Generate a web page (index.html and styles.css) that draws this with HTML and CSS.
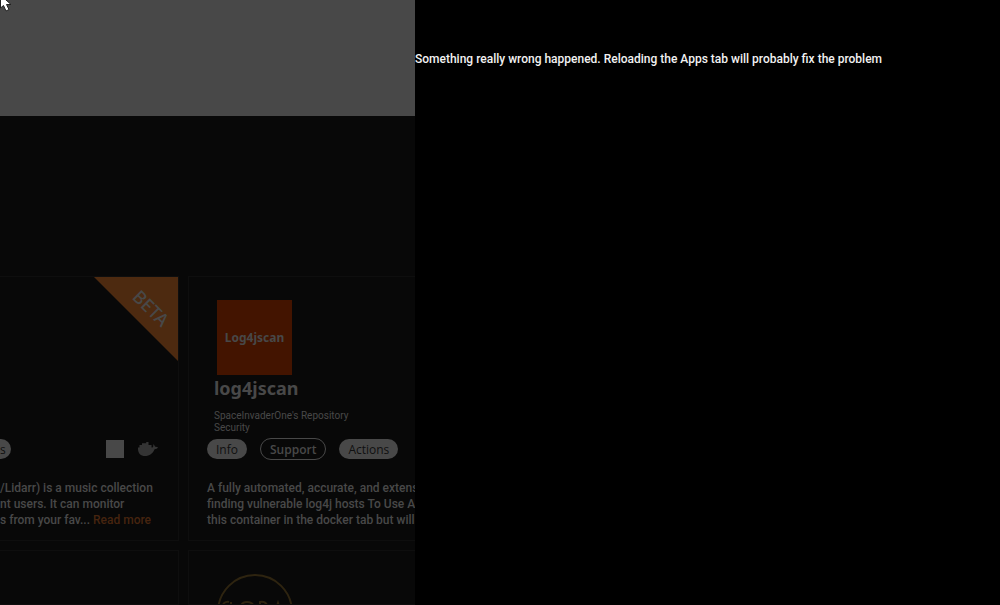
FILE: index.html
```html
<!DOCTYPE html>
<html lang="en">
<head>
    <meta charset="UTF-8">
    <meta name="viewport" content="width=device-width, initial-scale=1.0">
    <title>Apps</title>
    <link rel="stylesheet" href="styles.css">
</head>
<body>
    <header class="page-header"></header>

    <main class="app-grid">
        <article class="card card-cut">
            <div class="ribbon"><span class="ribbon-text">BETA</span></div>
            <div class="card-top"></div>
            <div class="card-actions">
                <button class="pill pill-cut">s</button>
                <div class="card-icons">
                    <input type="checkbox" class="pick" aria-label="Select app">
                    <svg class="docker" viewBox="0 0 20 14" aria-hidden="true">
                        <path d="M0 5.500h14.500c1-.6 1-2 .5-3.300c1.300.6 1.900 1.600 2 2.600c1-.2 2.100 0 3 .5c-.7 1.400-2 1.900-3.400 1.900C14.800 11.500 11.500 14 7 14C2 14-.3 10.500 0 5.500z"/>
                        <path d="M1.500 3h12v3h-12zM4 1.200h6.500v2H4zM8.200 0h2.300v3.200H8.200z"/>
                    </svg>
                </div>
            </div>
            <p class="description">/Lidarr) is a music collection<br>nt users. It can monitor<br>s from your fav... <a href="#" class="read-more">Read more</a></p>
        </article>

        <article class="card">
            <div class="card-top">
                <div class="logo">Log4jscan</div>
                <h2 class="app-name">log4jscan</h2>
                <div class="app-meta">SpaceInvaderOne's Repository<br>Security</div>
            </div>
            <div class="card-actions">
                <button class="pill">Info</button>
                <button class="pill pill-outline">Support</button>
                <button class="pill">Actions</button>
            </div>
            <p class="description">A fully automated, accurate, and extensive<br>finding vulnerable log4j hosts To Use After<br>this container in the docker tab but will</p>
        </article>

        <article class="card card-cut"></article>

        <article class="card">
            <svg class="emblem" viewBox="0 0 76 76" aria-hidden="true">
                <circle cx="38" cy="38" r="37"/>
                <path d="M6 30q3-3 6-2M14 28v4M24 32q1-4 6-4t7 4M43 32v-4q5-1 7 3M60 32l1-3 1 3"/>
            </svg>
        </article>
    </main>

    <aside class="sidebar">
        <p class="message">Something really wrong happened. Reloading the Apps tab will probably fix the problem</p>
    </aside>

    <svg class="cursor" viewBox="0 0 12 14" aria-hidden="true">
        <path d="M.5-5V8L3.500 5.500L6 11L9 9.500L6.500 4.500H11z"/>
    </svg>
</body>
</html>
```

FILE: styles.css
```css
* {
    margin: 0;
    padding: 0;
    box-sizing: border-box;
}

body {
    background-color: #080808;
    color: #484848;
    font-family: Roboto, "Noto Sans", sans-serif;
    font-size: 12px;
    height: 100vh;
    display: flex;
    flex-direction: column;
    overflow: hidden;
}

.page-header {
    flex: none;
    height: 116px;
    background-color: #484848;
}

.app-grid {
    flex: 1;
    min-height: 0;
    display: grid;
    grid-template-columns: 179px 376px;
    grid-template-rows: 265px 1fr;
    gap: 9px;
    padding-top: 160px;
    overflow: hidden;
}

.card {
    position: relative;
    min-height: 0;
    padding: 23px 18px 0;
    border: 1px solid #0e0e0e;
    overflow: hidden;
}

.card-cut {
    border-left: none;
    padding-left: 0;
}

.card-top {
    height: 138px;
    padding-left: 7px;
}

.logo {
    width: 75px;
    height: 75px;
    margin-left: 3px;
    background-color: #431400;
    display: flex;
    align-items: center;
    justify-content: center;
    font-family: "Noto Sans", sans-serif;
    font-weight: bold;
}

.app-name {
    font-family: "Noto Sans", sans-serif;
    font-size: 18px;
    line-height: 26px;
}

.app-meta {
    margin-top: 9px;
    font-size: 10px;
    line-height: 12px;
}

.card-actions {
    display: flex;
    align-items: center;
    gap: 13px;
    height: 22px;
}

.pill {
    height: 20px;
    padding: 0 9px;
    border: none;
    border-radius: 11px;
    background-color: #484848;
    color: #101010;
    font: 12px "Open Sans", sans-serif;
    cursor: pointer;
}

.pill-outline {
    height: 22px;
    border: 1px solid #484848;
    background-color: transparent;
    color: #484848;
    font-weight: 600;
}

.pill-cut {
    width: 11px;
    padding: 0;
    border-radius: 0 11px 11px 0;
    text-align: left;
}

.card-icons {
    display: flex;
    align-items: center;
    gap: 14px;
    margin-left: auto;
    margin-right: 2px;
}

.pick {
    appearance: none;
    width: 18px;
    height: 18px;
    background-color: #484848;
}

.docker {
    width: 20px;
    height: 14px;
    fill: #343434;
}

.description {
    margin-top: 20px;
    font-weight: 500;
    line-height: 16px;
    white-space: nowrap;
}

.read-more {
    color: #46240f;
    text-decoration: none;
}

.ribbon {
    position: absolute;
    top: 0;
    right: 0;
    width: 84px;
    height: 84px;
    background-color: #4d2a10;
    clip-path: polygon(0 0, 100% 0, 100% 100%);
}

.ribbon-text {
    position: absolute;
    top: 20px;
    right: 6px;
    font-family: "Noto Sans", sans-serif;
    font-size: 18px;
    font-weight: 500;
    line-height: 22px;
    transform: rotate(45deg);
}

.emblem {
    display: block;
    width: 76px;
    height: 76px;
    margin-left: 10px;
    fill: none;
    stroke: #2e2410;
    stroke-width: 2;
}

.sidebar {
    position: fixed;
    top: 0;
    right: 0;
    width: 58.5%;
    height: 100%;
    padding-top: 50px;
    background-color: #000;
}

.message {
    color: #f2f2f2;
    font-weight: 500;
    line-height: 18px;
}

.cursor {
    position: fixed;
    top: 0;
    left: 0;
    width: 12px;
    height: 14px;
    fill: #fff;
    stroke: #222;
}
```
